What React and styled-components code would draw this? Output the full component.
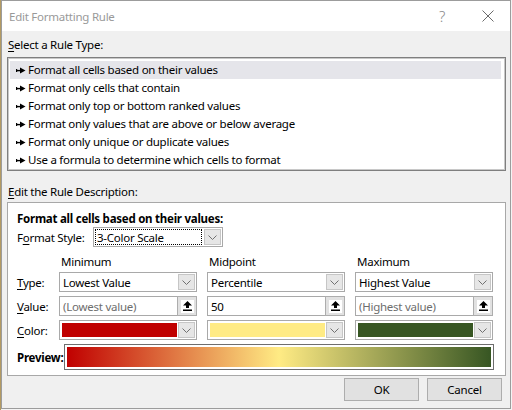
import React from "react";
import styled, { createGlobalStyle } from "styled-components";

const GlobalStyle = createGlobalStyle`
  html, body {
    margin: 0;
    padding: 0;
    background: #f4f4f4;
  }
  body {
    font-family: "Noto Sans", "Segoe UI", sans-serif;
    font-size: 11.5px;
    letter-spacing: -0.25px;
    color: #000;
  }
`;

const Desktop = styled.div`
  width: 512px;
  height: 410px;
  border-left: 1px solid #b39a62;
  box-sizing: border-box;
  overflow: hidden;
`;

const Window = styled.div`
  width: 510px;
  height: 409px;
  box-sizing: border-box;
  border: 1px solid #9c9c9c;
  background: #f0f0f0;
  display: flex;
  flex-direction: column;
`;

const TitleBar = styled.div`
  height: 30px;
  background: #fff;
  display: flex;
  align-items: center;
  padding-left: 7px;
  color: #999;
`;

const TitleText = styled.div`
  flex: 1;
`;

const HelpBtn = styled.div`
  width: 20px;
  font-size: 15px;
  color: #8a8a8a;
  font-weight: 300;
  margin-right: 26px;
  text-align: center;
`;

const CloseBtn = styled.div`
  width: 20px;
  height: 20px;
  margin-right: 12px;
  display: flex;
  align-items: center;
  justify-content: center;
`;

const Body = styled.div`
  flex: 1;
  padding: 0 4px 0 5px;
  display: flex;
  flex-direction: column;
`;

const SectionLabel = styled.div`
  height: ${(p) => p.$h}px;
  padding-top: ${(p) => p.$top}px;
  padding-left: 1px;
  box-sizing: border-box;
  line-height: 16px;
`;

const Key = styled.span`
  text-decoration: underline;
  text-underline-offset: 2px;
`;

const ListBox = styled.div`
  height: 114px;
  box-sizing: border-box;
  border: 1px solid #7f7f7f;
  box-shadow: inset 0 0 0 1px #c8c8c8;
  background: #fff;
  padding: 3px 4px 3px 2px;
`;

const ListRow = styled.div`
  height: 18px;
  display: flex;
  align-items: center;
  padding-left: 6px;
  background: ${(p) => (p.$selected ? "#e5e5ea" : "transparent")};
  gap: 2px;
  line-height: 18px;
  white-space: nowrap;
`;

const DescBox = styled.div`
  border: 1px solid #a8a8a8;
  background: #fff;
  padding: 8px 0 5px 9px;
  display: flex;
  flex-direction: column;
`;

const Heading = styled.div`
  font-weight: bold;
  line-height: 16px;
`;

const StyleRow = styled.div`
  display: flex;
  align-items: center;
  height: 20px;
`;

const StyleLabel = styled.div`
  width: 76px;
`;

const Grid = styled.div`
  display: grid;
  grid-template-columns: 32px 138px 138px 138px;
  column-gap: 10px;
  row-gap: ${(p) => p.$rowGap || 0}px;
  grid-auto-rows: ${(p) => p.$rowH}px;
  margin-top: ${(p) => p.$top}px;
  align-items: center;
`;

const ColHead = styled.div`
  padding-left: 2px;
  line-height: 16px;
`;

const Field = styled.div`
  height: 20px;
  width: ${(p) => (p.$w ? `${p.$w}px` : "auto")};
  box-sizing: border-box;
  border: 1px solid #a9a9a9;
  background: #fff;
  display: flex;
  align-items: stretch;
`;

const FieldText = styled.div`
  flex: 1;
  padding-left: 3px;
  display: flex;
  align-items: center;
  white-space: nowrap;
  overflow: hidden;
  color: ${(p) => (p.$muted ? "#6d6d6d" : "#000")};
`;

const FocusText = styled(FieldText)`
  margin: 1px;
  padding-left: 2px;
  outline: 1px dotted #000;
  outline-offset: -1px;
`;

const DropBtn = styled.div`
  width: 17px;
  margin: 1px;
  box-sizing: border-box;
  border: 1px solid #c6c6c6;
  background: #e6e6e6;
  display: flex;
  align-items: center;
  justify-content: center;
`;

const UploadBtn = styled.div`
  width: 20px;
  margin: -1px -1px -1px 0;
  box-sizing: border-box;
  border: 1px solid #adadad;
  background: #e1e1e1;
  display: flex;
  align-items: center;
  justify-content: center;
`;

const UploadFace = styled.div`
  width: 13px;
  height: 13px;
  background: #fff;
  display: flex;
  align-items: center;
  justify-content: center;
`;

const Swatch = styled.div`
  flex: 1;
  margin: 2px 0 2px 2px;
  background: ${(p) => p.$color};
`;

const PreviewRow = styled.div`
  display: flex;
  align-items: center;
  height: 26px;
  margin-top: 4px;
`;

const PreviewLabel = styled.div`
  width: 47px;
  font-weight: bold;
  white-space: nowrap;
`;

const PreviewBox = styled.div`
  width: 430px;
  height: 26px;
  box-sizing: border-box;
  border: 1px solid #6e6e6e;
  padding: 2px;
  background: #fff;
`;

const Gradient = styled.div`
  height: 100%;
  background: linear-gradient(to right, #c00000 0%, #ffeb84 50%, #375623 100%);
`;

const ButtonRow = styled.div`
  display: flex;
  justify-content: flex-end;
  gap: 8px;
  margin-top: 2px;
  padding-right: 4px;
`;

const Button = styled.div`
  width: 75px;
  height: 23px;
  box-sizing: border-box;
  border: 1px solid #adadad;
  background: #e1e1e1;
  display: flex;
  align-items: center;
  justify-content: center;
`;

const RuleArrow = () => (
  <svg width="10" height="7" viewBox="0 0 10 7">
    <rect x="0" y="2" width="1.2" height="3" fill="#000" />
    <rect x="0" y="2.9" width="5" height="1.4" fill="#000" />
    <polygon points="4,0.6 9.5,3.6 4,6.6" fill="#000" />
  </svg>
);

const Chevron = () => (
  <svg width="9" height="5" viewBox="0 0 9 5">
    <polyline points="0.5,0.5 4.5,4.5 8.5,0.5" fill="none" stroke="#707070" strokeWidth="1" />
  </svg>
);

const UploadIcon = () => (
  <svg width="9" height="10" viewBox="0 0 9 10">
    <polygon points="4.5,0 9,4.5 6,4.5 6,7 3,7 3,4.5 0,4.5" fill="#000" />
    <rect x="0" y="8.5" width="9" height="1.5" fill="#000" />
  </svg>
);

const Combo = ({ children }) => (
  <Field>
    <FieldText>{children}</FieldText>
    <DropBtn>
      <Chevron />
    </DropBtn>
  </Field>
);

const ValueInput = ({ value, muted }) => (
  <Field>
    <FieldText $muted={muted}>{value}</FieldText>
    <UploadBtn>
      <UploadFace>
        <UploadIcon />
      </UploadFace>
    </UploadBtn>
  </Field>
);

const ColorPick = ({ color }) => (
  <Field>
    <Swatch $color={color} />
    <DropBtn>
      <Chevron />
    </DropBtn>
  </Field>
);

const rules = [
  "Format all cells based on their values",
  "Format only cells that contain",
  "Format only top or bottom ranked values",
  "Format only values that are above or below average",
  "Format only unique or duplicate values",
  "Use a formula to determine which cells to format",
];

export default function App() {
  return (
    <Desktop>
      <GlobalStyle />
      <Window>
        <TitleBar>
          <TitleText>Edit Formatting Rule</TitleText>
          <HelpBtn>?</HelpBtn>
          <CloseBtn>
            <svg width="12" height="12" viewBox="0 0 12 12">
              <path d="M0.5 0.5 L11.5 11.5 M11.5 0.5 L0.5 11.5" stroke="#6a6a6a" strokeWidth="1" />
            </svg>
          </CloseBtn>
        </TitleBar>
        <Body>
          <SectionLabel $h={26} $top={6}>
            <Key>S</Key>elect a Rule Type:
          </SectionLabel>
          <ListBox>
            {rules.map((r, i) => (
              <ListRow key={r} $selected={i === 0}>
                <RuleArrow />
                <span>{r}</span>
              </ListRow>
            ))}
          </ListBox>
          <SectionLabel $h={31} $top={13}>
            <Key>E</Key>dit the Rule Description:
          </SectionLabel>
          <DescBox>
            <Heading>Format all cells based on their values:</Heading>
            <StyleRow>
              <StyleLabel>
                F<Key>o</Key>rmat Style:
              </StyleLabel>
              <Field $w={130}>
                <FocusText>3-Color Scale</FocusText>
                <DropBtn>
                  <Chevron />
                </DropBtn>
              </Field>
            </StyleRow>
            <Grid $rowH={16} $top={7}>
              <div />
              <ColHead>Minimum</ColHead>
              <ColHead>Midpoint</ColHead>
              <ColHead>Maximum</ColHead>
            </Grid>
            <Grid $rowH={20} $rowGap={4} $top={2}>
              <div>
                <Key>T</Key>ype:
              </div>
              <Combo>Lowest Value</Combo>
              <Combo>Percentile</Combo>
              <Combo>Highest Value</Combo>

              <div>
                <Key>V</Key>alue:
              </div>
              <ValueInput value="(Lowest value)" muted />
              <ValueInput value="50" />
              <ValueInput value="(Highest value)" muted />

              <div>
                <Key>C</Key>olor:
              </div>
              <ColorPick color="#c00000" />
              <ColorPick color="#ffeb84" />
              <ColorPick color="#375623" />
            </Grid>
            <PreviewRow>
              <PreviewLabel>Preview:</PreviewLabel>
              <PreviewBox>
                <Gradient />
              </PreviewBox>
            </PreviewRow>
          </DescBox>
          <ButtonRow>
            <Button>OK</Button>
            <Button>Cancel</Button>
          </ButtonRow>
        </Body>
      </Window>
    </Desktop>
  );
}
